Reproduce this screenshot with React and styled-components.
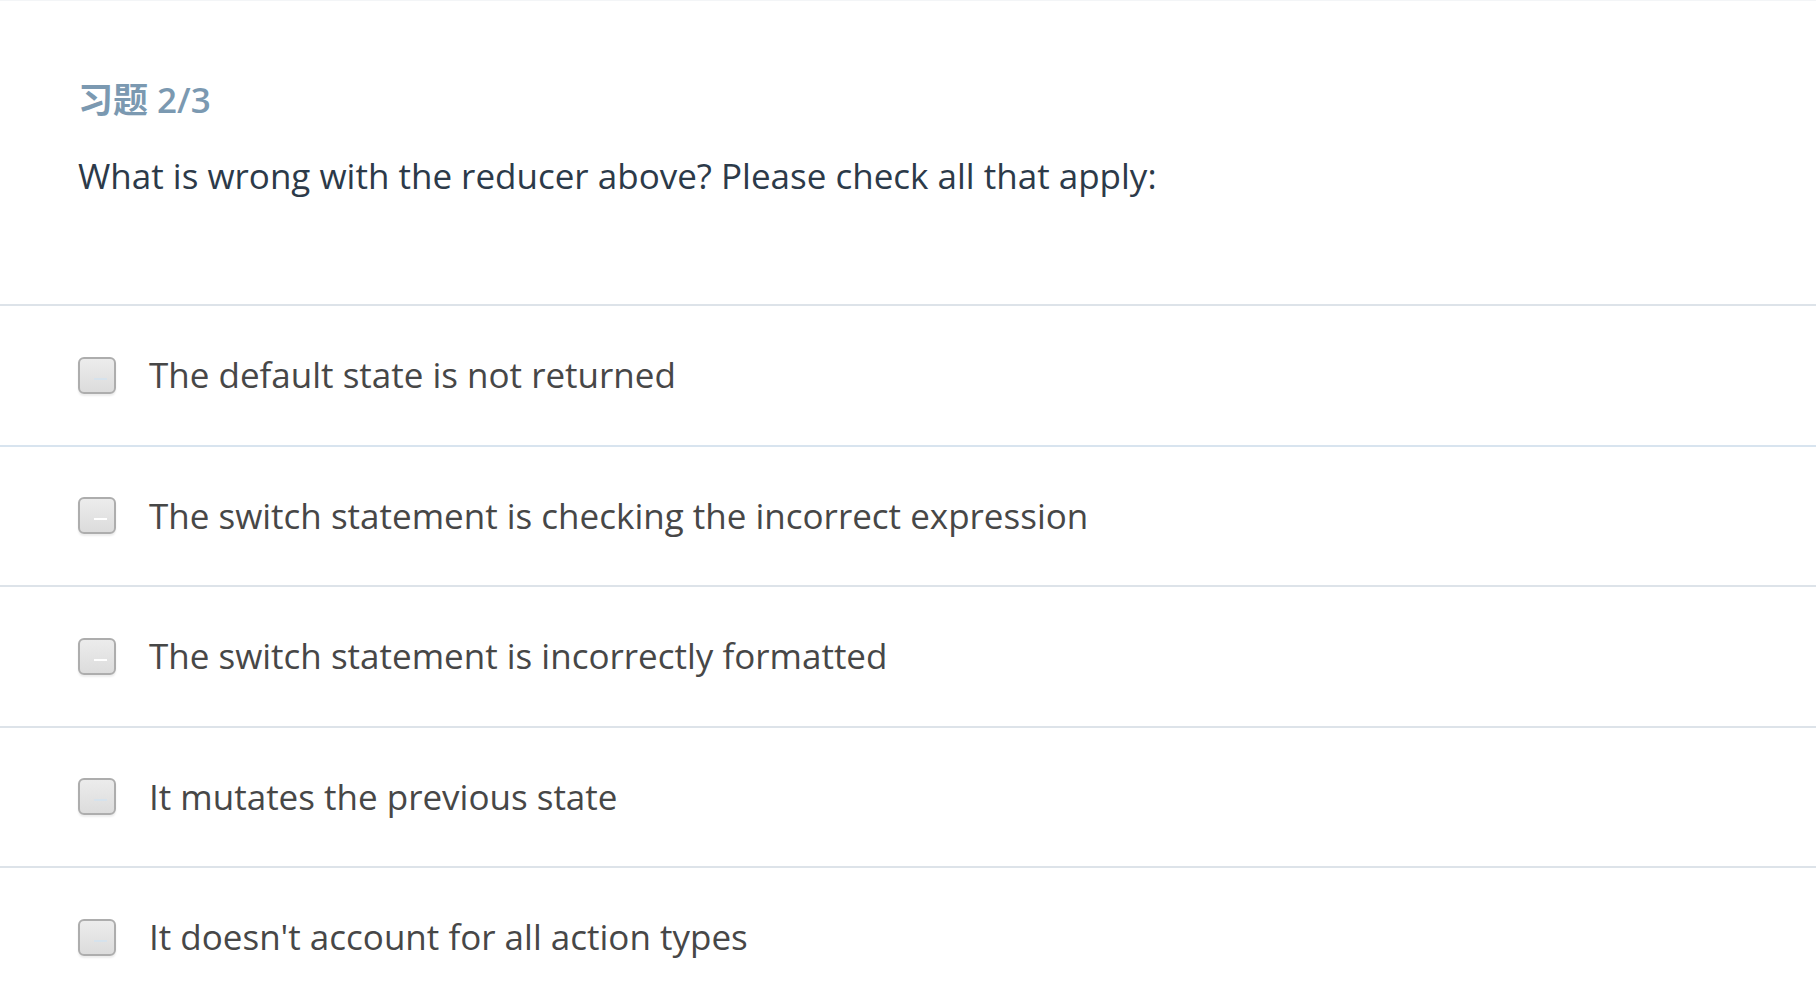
import React from "react";
import styled, { createGlobalStyle } from "styled-components";

const GlobalStyle = createGlobalStyle`
  html, body {
    margin: 0;
    padding: 0;
    background: #ffffff;
  }
  body {
    font-family: "Open Sans", "Noto Sans CJK SC", sans-serif;
    -webkit-font-smoothing: antialiased;
  }
`;

const Page = styled.div`
  width: 100%;
  min-height: 992px;
  background: #fff;
  border-top: 1px solid #f3f5f7;
  box-sizing: border-box;
`;

const Header = styled.header`
  display: flex;
  flex-direction: column;
  gap: 28px;
  padding: 75px 78px 104px;
  border-bottom: 2px solid #dde3e9;
`;

const Counter = styled.h2`
  margin: 0;
  font-family: "Open Sans", "Noto Sans CJK SC", sans-serif;
  font-size: 35px;
  line-height: 48px;
  font-weight: 600;
  color: #7b99b1;
`;

const Question = styled.p`
  margin: 0;
  font-size: 35px;
  line-height: 48px;
  font-weight: 400;
  color: #2c3a49;
`;

const Options = styled.ul`
  list-style: none;
  margin: 0;
  padding: 0;
`;

const Option = styled.li`
  display: flex;
  align-items: center;
  gap: 33px;
  height: 138.5px;
  padding: 0 78px;
  border-bottom: 2px solid ${(p) => (p.$accent ? "#d8e4ef" : "#dde3e9")};
`;

const Box = styled.span`
  flex: none;
  display: flex;
  align-items: center;
  justify-content: center;
  box-sizing: border-box;
  width: 38px;
  height: 37px;
  padding: 7px 0 0 6px;
  border: 2px solid #adadad;
  border-radius: 6px;
  background: linear-gradient(#ececec, #dcdcdc);
  box-shadow: 0 2px 2px rgba(0, 0, 0, 0.08);
`;

const Dash = styled.span`
  width: 13px;
  height: 2px;
  background: ${(p) => (p.$white ? "#ffffff" : "#d6e2ec")};
`;

const Label = styled.span`
  font-size: 35px;
  line-height: 48px;
  color: #474747;
`;

const options = [
  { text: "The default state is not returned", accent: true },
  { text: "The switch statement is checking the incorrect expression", white: true },
  { text: "The switch statement is incorrectly formatted", white: true },
  { text: "It mutates the previous state" },
  { text: "It doesn't account for all action types" },
];

export default function App() {
  return (
    <>
      <GlobalStyle />
      <Page>
        <Header>
          <Counter>习题 2/3</Counter>
          <Question>What is wrong with the reducer above? Please check all that apply:</Question>
        </Header>
        <Options>
          {options.map((o) => (
            <Option key={o.text} $accent={o.accent}>
              <Box>
                <Dash $white={o.white} />
              </Box>
              <Label>{o.text}</Label>
            </Option>
          ))}
        </Options>
      </Page>
    </>
  );
}
